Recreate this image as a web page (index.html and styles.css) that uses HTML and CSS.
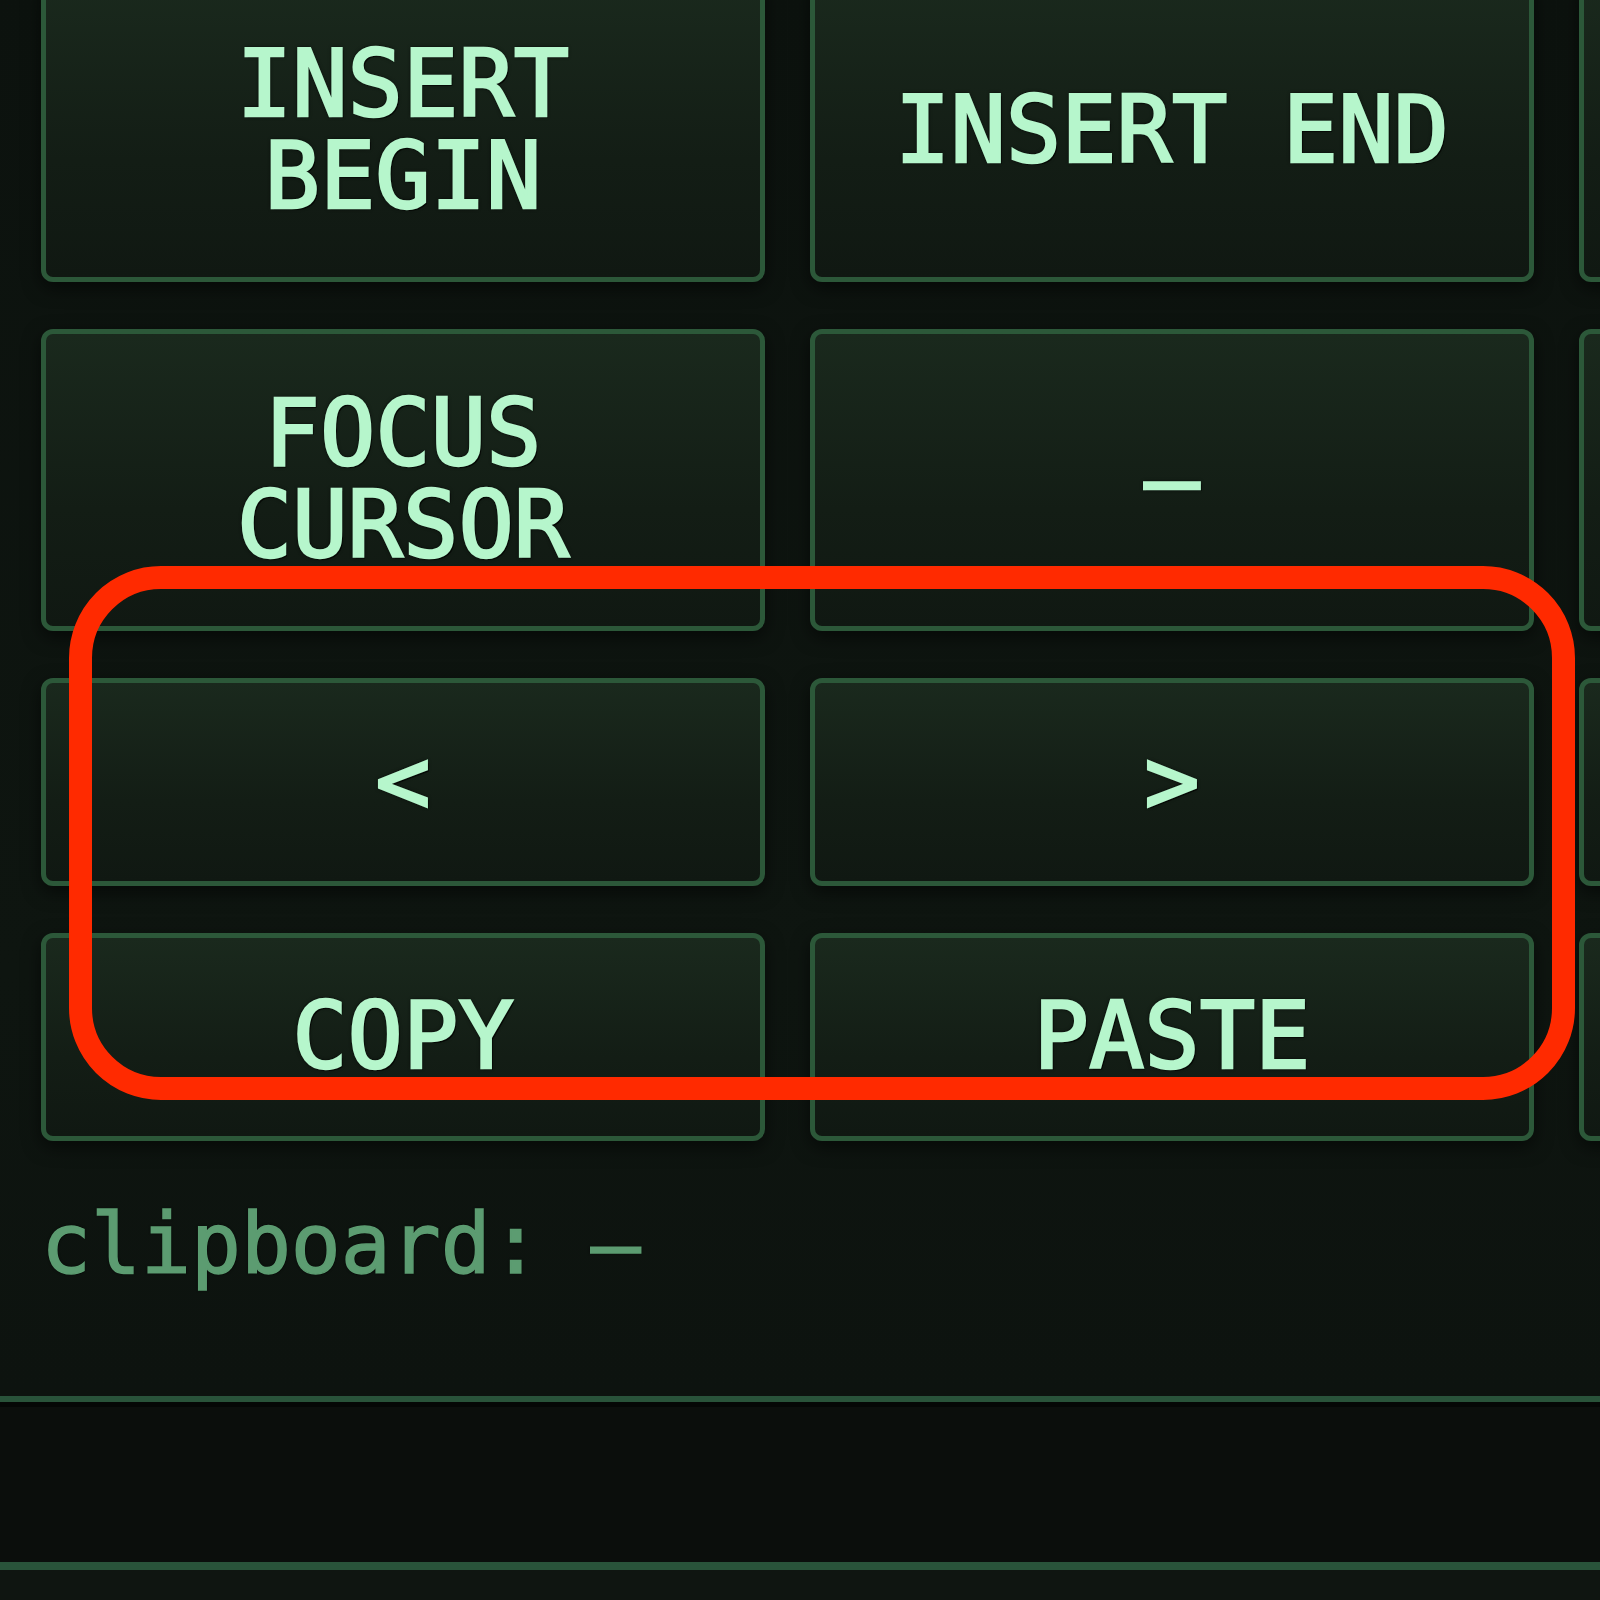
FILE: index.html
```html
<!DOCTYPE html>
<html>
<head>
    <meta charset="UTF-8">
    <title>Editor Keys</title>
    <link rel="stylesheet" href="styles.css">
</head>
<body>

<div class="keypad">
    <div class="keys">
        <button class="key">INSERT BEGIN</button>
        <button class="key">INSERT END</button>
        <button class="key"></button>

        <button class="key">FOCUS CURSOR</button>
        <button class="key">—</button>
        <button class="key"></button>

        <button class="key">&lt;</button>
        <button class="key">&gt;</button>
        <button class="key"></button>

        <button class="key">COPY</button>
        <button class="key">PASTE</button>
        <button class="key"></button>
    </div>

    <p class="clip">clipboard: —</p>
</div>

<div class="bar"></div>
<div class="rest"></div>

<!-- highlight round the cursor / clipboard keys -->
<div class="mark"></div>

</body>
</html>
```

FILE: styles.css
```css
html, body {
    margin: 0;
    padding: 0;
}

body {
    width: 1600px;
    height: 1600px;
    overflow: hidden;
    position: relative;
    background-color: #0f1511;
    font-family: "DejaVu Sans Mono", "Liberation Mono", monospace;
}

.keypad {
    background: linear-gradient(#0c120e, #0e1510 70%, #0d130f);
    padding: 0 0 110px 41px;
    border-bottom: 8px solid #29533a;
    box-shadow: 0 3px 0 #050706;
}

.keys {
    display: grid;
    grid-template-columns: repeat(3, 724px);
    grid-template-rows: 302px 302px 208px 208px;
    column-gap: 45px;
    row-gap: 47px;
    margin-top: -20px;
}

.key {
    box-sizing: border-box;
    display: flex;
    align-items: center;
    justify-content: center;
    padding: 0 40px;
    background: linear-gradient(#1a291d, #131d15 60%, #101812);
    border: 5px solid #2c5839;
    border-radius: 12px;
    box-shadow: 0 6px 18px rgba(0, 0, 0, 0.55);
    color: #b6f6cc;
    font-family: "DejaVu Sans Mono", "Liberation Mono", monospace;
    font-size: 92px;
    font-weight: normal;
    line-height: 92px;
    text-align: center;
    -webkit-text-stroke: 2.5px #b6f6cc;
    text-shadow: 2px 2px 0 #050805, -1px -1px 1px rgba(0, 0, 0, 0.8), 0 0 4px #000;
    cursor: pointer;
}

.clip {
    margin: 62px 0 0 0;
    color: #5c9c71;
    font-size: 83px;
    line-height: 1;
    -webkit-text-stroke: 1.5px #5c9c71;
    text-shadow: 1px 1px 0 #050805, 0 0 3px #000;
}

.bar {
    height: 158px;
    background-color: #0b0e0c;
    border-bottom: 8px solid #29533a;
    box-shadow: inset 0 3px 0 #050706, 0 -2px 0 #050706;
}

.rest {
    height: 40px;
    background-color: #0f1511;
}

.mark {
    position: absolute;
    left: 69px;
    top: 566px;
    width: 1506px;
    height: 534px;
    box-sizing: border-box;
    border: 23px solid #ff2a00;
    border-radius: 92px;
}
```
